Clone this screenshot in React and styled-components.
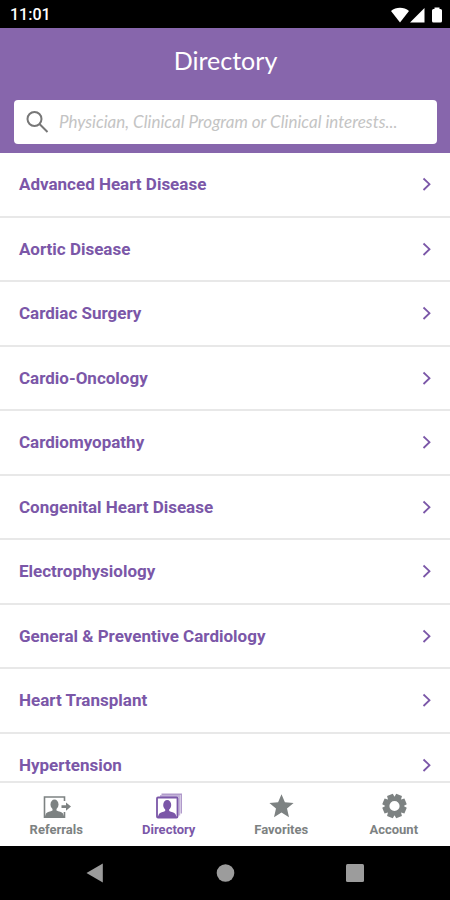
import React from "react";
import styled, { createGlobalStyle } from "styled-components";

const programs = [
  "Advanced Heart Disease",
  "Aortic Disease",
  "Cardiac Surgery",
  "Cardio-Oncology",
  "Cardiomyopathy",
  "Congenital Heart Disease",
  "Electrophysiology",
  "General & Preventive Cardiology",
  "Heart Transplant",
  "Hypertension",
];

const ReferralsIcon = () => (
  <svg width="30" height="26" viewBox="0 0 30 26" aria-hidden="true">
    <path
      d="M23.5 8V4H3.500V24.200H23.500V19"
      fill="none"
      stroke="currentColor"
      strokeWidth="1.600"
    />
    <ellipse cx="13.500" cy="11.500" rx="4" ry="5" fill="currentColor" />
    <path
      d="M11.500 14.500h4v3c2 1.200 5.500 1.200 6.500 3l1.500 4h-20l1.500-4c1-1.800 4.500-1.800 6.500-3z"
      fill="currentColor"
    />
    <path d="M20.500 12.300h4.500V9.400l5 4.200-5 4.200v-2.900h-4.500z" fill="currentColor" />
  </svg>
);

const DirectoryIcon = () => (
  <svg width="30" height="26" viewBox="0 0 30 26" aria-hidden="true">
    <path
      d="M7.500 1.200H27.300V20.500"
      fill="none"
      stroke="currentColor"
      strokeWidth="1.400"
      opacity="0.600"
    />
    <path
      d="M6 3H25.200V22.500"
      fill="none"
      stroke="currentColor"
      strokeWidth="2"
      opacity="0.450"
    />
    <rect
      x="3"
      y="4.500"
      width="20.500"
      height="20"
      rx="1"
      fill="#fff"
      stroke="currentColor"
      strokeWidth="1.800"
    />
    <ellipse cx="13.200" cy="12" rx="4" ry="5" fill="currentColor" />
    <path
      d="M11.200 15h4v3c2 1.200 5.200 1.200 6.200 3l1.500 3.500H3.500l1.500-3.500c1-1.800 4.200-1.800 6.200-3z"
      fill="currentColor"
    />
  </svg>
);

const StarIcon = () => (
  <svg width="30" height="26" viewBox="0 0 30 26" aria-hidden="true">
    <path
      d="M15.500 1.200l3.400 8 8.700.7-6.600 5.700 2 8.600-7.500-4.600-7.500 4.600 2-8.600-6.600-5.700 8.700-.7z"
      fill="currentColor"
    />
  </svg>
);

const teeth = [22.5, 67.5, 112.5, 157.5, 202.5, 247.5, 292.5, 337.5];

const GearIcon = () => (
  <svg width="30" height="26" viewBox="0 0 30 26" aria-hidden="true">
    <g fill="currentColor">
      {teeth.map((angle) => (
        <path
          key={angle}
          d="M11.800 6l.6-5h6.200l.6 5z"
          transform={`rotate(${angle} 15.500 13)`}
        />
      ))}
    </g>
    <circle
      cx="15.500"
      cy="13"
      r="7.200"
      fill="none"
      stroke="currentColor"
      strokeWidth="4.200"
    />
  </svg>
);

const tabs = [
  { label: "Referrals", Icon: ReferralsIcon },
  { label: "Directory", Icon: DirectoryIcon, active: true },
  { label: "Favorites", Icon: StarIcon },
  { label: "Account", Icon: GearIcon },
];

const App = () => {
  return (
    <>
      <GlobalStyle />
      <Screen>
        <StatusBar>
          <span>11:01</span>
          <svg width="52" height="16" viewBox="0 0 52 16" aria-label="Status">
            <g fill="#fff">
              <path d="M1 4C6 -.2 14 -.2 19 4L10 15.500z" />
              <path d="M34.500 1V15.500H20z" />
              <path d="M44.500 .5h5v1.500h1q1.500 0 1.500 1.500v10.500q0 1.500-1.500 1.500h-7q-1.500 0-1.500-1.500v-10.500q0-1.500 1.500-1.500h1z" />
            </g>
          </svg>
        </StatusBar>
        <Header>
          <h1>Directory</h1>
          <SearchBox>
            <svg width="24" height="24" viewBox="0 0 24 24" aria-hidden="true">
              <g fill="none" stroke="#777" strokeWidth="2">
                <circle cx="8.500" cy="9" r="7" />
                <path d="M13.500 14l8 8" />
              </g>
            </svg>
            <input
              type="text"
              aria-label="Search the directory"
              placeholder="Physician, Clinical Program or Clinical interests..."
            />
          </SearchBox>
        </Header>
        <Scroller>
          <ProgramList>
            {programs.map((name) => (
              <ProgramItem key={name}>
                <ProgramLink href="#">
                  {name}
                  <svg width="10" height="14" viewBox="0 0 10 14" aria-hidden="true">
                    <path
                      d="M1.500 1.500L7.500 7.200 1.500 13"
                      fill="none"
                      stroke="currentColor"
                      strokeWidth="1.800"
                    />
                  </svg>
                </ProgramLink>
              </ProgramItem>
            ))}
          </ProgramList>
        </Scroller>
        <TabBar>
          {tabs.map(({ label, Icon, active }) => (
            <Tab key={label} type="button" $active={active}>
              <Icon />
              {label}
            </Tab>
          ))}
        </TabBar>
        <SystemBar>
          <SystemButton type="button" aria-label="Back">
            <svg width="20" height="20" viewBox="0 0 20 20">
              <path d="M1.500 10L17.800 .5v19z" fill="#9c9c9c" />
            </svg>
          </SystemButton>
          <SystemButton type="button" aria-label="Home">
            <svg width="20" height="20" viewBox="0 0 20 20">
              <circle cx="10.500" cy="10" r="8.800" fill="#9c9c9c" />
            </svg>
          </SystemButton>
          <SystemButton type="button" aria-label="Recent apps">
            <svg width="20" height="20" viewBox="0 0 20 20">
              <rect x="1" y="1" width="18" height="18" rx="1.500" fill="#9c9c9c" />
            </svg>
          </SystemButton>
        </SystemBar>
      </Screen>
    </>
  );
};

const GlobalStyle = createGlobalStyle`
  :root {
    --purple: #8766ac;
    --link: #7b57a8;
    --gray: #7d8282;
    --line: #e8e8e8;
  }
  * {
    margin: 0;
    padding: 0;
    box-sizing: border-box;
  }
  body {
    background: #fff;
    font-family: Roboto, sans-serif;
  }
  svg {
    display: block;
    flex-shrink: 0;
  }
  button {
    border: none;
    background: none;
    font: inherit;
    cursor: pointer;
  }
`;

const Screen = styled.div`
  display: flex;
  flex-direction: column;
  height: 100vh;
`;

const StatusBar = styled.div`
  display: flex;
  align-items: center;
  justify-content: space-between;
  height: 28px;
  padding: 1px 8px 0 10px;
  background: #000;
  color: #fff;
  font-size: 16px;
  font-weight: 500;
`;

const Header = styled.header`
  padding: 16px 13px 9px 14px;
  background: var(--purple);
  h1 {
    margin-bottom: 24px;
    color: #fff;
    font-family: Lato, sans-serif;
    font-size: 25px;
    font-weight: 400;
    line-height: 32px;
    text-align: center;
  }
`;

const SearchBox = styled.label`
  display: flex;
  align-items: center;
  gap: 9px;
  height: 44px;
  padding: 0 12px;
  border-radius: 4px;
  background: #fff;
  input {
    flex: 1;
    min-width: 0;
    border: none;
    outline: none;
    background: none;
    font-family: Lato, sans-serif;
    font-size: 17px;
    font-style: italic;
    line-height: 20px;
  }
  input::placeholder {
    color: #c4c4c4;
  }
`;

const Scroller = styled.main`
  flex: 1;
  min-height: 0;
  overflow-y: auto;
  scrollbar-width: none;
`;

const ProgramList = styled.ul`
  display: grid;
  grid-auto-rows: 1fr;
  min-height: 645px;
  list-style: none;
`;

const ProgramItem = styled.li`
  display: flex;
  border-bottom: 2px solid var(--line);
`;

const ProgramLink = styled.a`
  flex: 1;
  display: flex;
  align-items: center;
  justify-content: space-between;
  padding: 0 18px 0 19px;
  color: var(--link);
  font-size: 17px;
  font-weight: 700;
  text-decoration: none;
`;

const TabBar = styled.nav`
  display: grid;
  grid-template-columns: repeat(4, 1fr);
  height: 65px;
  border-top: 2px solid var(--line);
  background: #fff;
`;

const Tab = styled.button`
  display: flex;
  flex-direction: column;
  align-items: center;
  gap: 1px;
  padding-top: 10px;
  color: ${({ $active }) => ($active ? "var(--link)" : "var(--gray)")};
  font-size: 13px;
  font-weight: 700;
  line-height: 20px;
`;

const SystemBar = styled.div`
  display: flex;
  align-items: center;
  justify-content: center;
  gap: 110px;
  height: 54px;
  background: #000;
`;

const SystemButton = styled.button`
  display: flex;
`;

export default App;
